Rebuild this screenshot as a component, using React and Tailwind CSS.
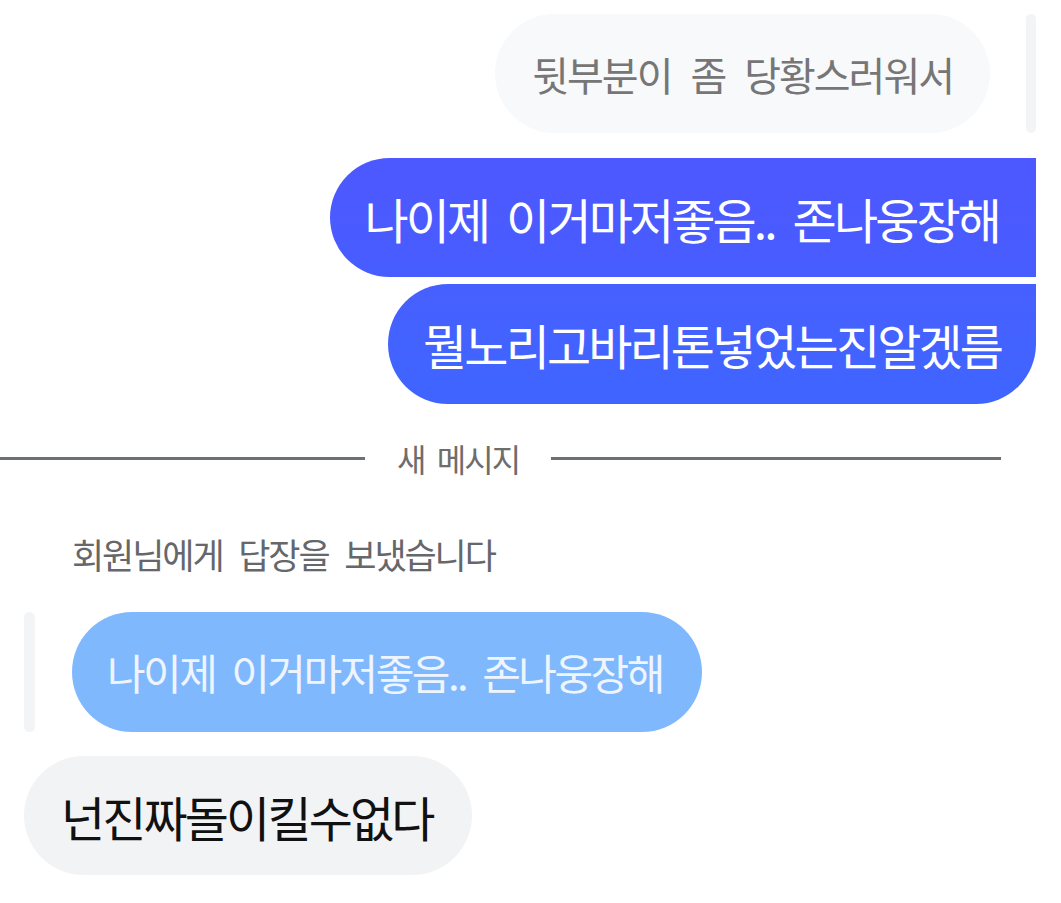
import React from "react";

const KR = { fontFamily: '"Noto Sans CJK KR", "Noto Sans", sans-serif' };

export default function App() {
  return (
    <div className="w-[1061px] h-[903px] bg-white overflow-hidden" style={KR}>
      <div className="flex flex-col pt-[14px]">
        {/* Row 1: replied-to gray bubble with bar on the right */}
        <div className="flex justify-end pr-[25px] gap-[36px]">
          <div className="h-[119px] rounded-full bg-[#f8f9fb] flex items-center pl-[37px] pr-[37px]">
            <span className="text-[40px] tracking-[-0.05em] [word-spacing:12px] text-[#767676] leading-none whitespace-nowrap">
              뒷부분이 좀 당황스러워서
            </span>
          </div>
          <div className="w-[10px] h-[119px] rounded-full bg-[#f3f4f6]" />
        </div>

        {/* Blue bubbles */}
        <div className="flex flex-col items-end pr-[25px] mt-[25px] gap-[7px]">
          <div className="h-[119px] bg-gradient-to-b from-[#4d58ff] to-[#475dff] text-white flex items-center pl-[34px] pr-[37px] rounded-l-full rounded-tr-[48px] rounded-br-[10px]">
            <span className="text-[48px] tracking-[-0.06em] [word-spacing:10px] leading-none whitespace-nowrap">
              나이제 이거마저좋음.. 존나웅장해
            </span>
          </div>
          <div className="h-[120px] bg-gradient-to-b from-[#4660ff] to-[#3f65ff] text-white flex items-center pl-[35px] pr-[35px] rounded-l-full rounded-tr-[10px] rounded-br-full">
            <span className="text-[48px] tracking-[-0.06em] leading-none whitespace-nowrap">
              뭘노리고바리톤넣었는진알겠름
            </span>
          </div>
        </div>

        {/* Divider */}
        <div className="flex items-center mt-[39px] h-[30px]">
          <div className="w-[365px] h-[3px] bg-[#6b7174]" />
          <span className="mx-[32px] text-[32px] tracking-[-0.06em] [word-spacing:7px] text-[#6d6d6d] leading-none whitespace-nowrap">
            새 메시지
          </span>
          <div className="w-[450px] h-[3px] bg-[#6b7174]" />
        </div>

        {/* Reply label */}
        <div className="mt-[63px] pl-[72px]">
          <span className="text-[35px] tracking-[-0.06em] [word-spacing:10px] text-[#65676b] leading-none whitespace-nowrap">
            회원님에게 답장을 보냈습니다
          </span>
        </div>

        {/* Replied bubble with left bar */}
        <div className="flex items-stretch pl-[24px] gap-[37px] mt-[38px]">
          <div className="w-[11px] h-[120px] rounded-full bg-[#f3f4f6]" />
          <div className="h-[120px] rounded-full bg-[#80b8fd] flex items-center pl-[35px] pr-[39px]">
            <span className="text-[42px] tracking-[-0.06em] [word-spacing:9px] text-[#eef5ff] leading-none whitespace-nowrap">
              나이제 이거마저좋음.. 존나웅장해
            </span>
          </div>
        </div>

        {/* Received gray bubble */}
        <div className="flex pl-[24px] mt-[24px]">
          <div className="h-[119px] rounded-full bg-[#f2f3f5] flex items-center pl-[37px] pr-[39px]">
            <span className="text-[48px] tracking-[-0.06em] text-[#111111] leading-none whitespace-nowrap">
              넌진짜돌이킬수없다
            </span>
          </div>
        </div>
      </div>
    </div>
  );
}
